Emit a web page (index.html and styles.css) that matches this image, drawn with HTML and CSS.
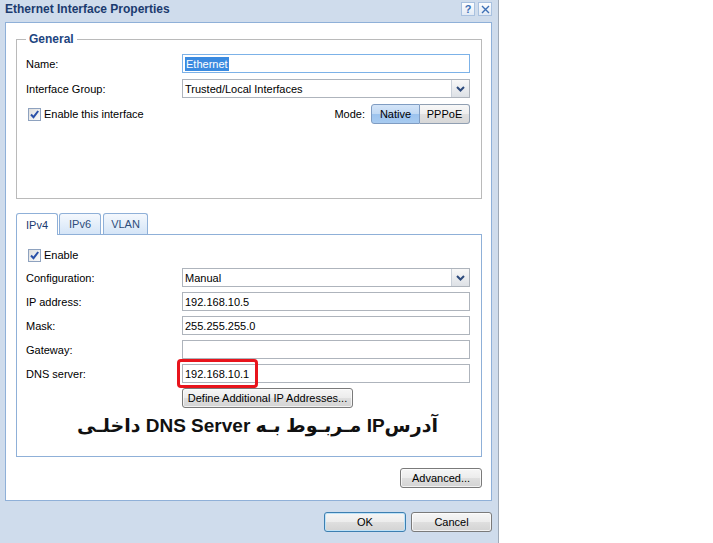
FILE: index.html
```html
<!DOCTYPE html>
<html>
<head>
<meta charset="utf-8">
<title>Ethernet Interface Properties</title>
<link rel="stylesheet" href="styles.css">
</head>
<body>
<div class="dialog">
  <div class="titlebar">
    <div class="title">Ethernet Interface Properties</div>
    <div class="tb-btns">
      <span class="tb-btn">?</span>
      <span class="tb-btn"><svg width="9" height="9" viewBox="0 0 9 9"><path d="M1 1L8 8M8 1L1 8" stroke="#3d6fb5" stroke-width="1.4" fill="none"/></svg></span>
    </div>
  </div>

  <div class="panel">
    <fieldset class="group">
      <legend>General</legend>
      <div class="row">
        <span class="lbl">Name:</span>
        <div class="input focus"><span class="sel">Ethernet</span></div>
      </div>
      <div class="row">
        <span class="lbl">Interface Group:</span>
        <div class="input select"><span class="val">Trusted/Local Interfaces</span><span class="arrow"><svg width="9" height="6" viewBox="0 0 9 6"><path d="M1 1L4.5 4.5L8 1" fill="none" stroke="#2d4a7c" stroke-width="2"/></svg></span></div>
      </div>
      <div class="row mode-row">
        <span class="check"><span class="cb"><svg width="11" height="11" viewBox="0 0 11 11"><path d="M2 5.5L4.5 8.2L9.2 2" fill="none" stroke="#2a50a8" stroke-width="2"/></svg></span>Enable this interface</span>
        <span class="mode-lbl">Mode:</span>
        <div class="seg">
          <span class="seg-btn active">Native</span>
          <span class="seg-btn">PPPoE</span>
        </div>
      </div>
    </fieldset>

    <div class="tabs">
      <span class="tab active t-ipv4">IPv4</span>
      <span class="tab t-ipv6">IPv6</span>
      <span class="tab t-vlan">VLAN</span>
    </div>
    <div class="tabpanel">
      <div class="row cb-row">
        <span class="check"><span class="cb"><svg width="11" height="11" viewBox="0 0 11 11"><path d="M2 5.5L4.5 8.2L9.2 2" fill="none" stroke="#2a50a8" stroke-width="2"/></svg></span>Enable</span>
      </div>
      <div class="row">
        <span class="lbl">Configuration:</span>
        <div class="input select"><span class="val">Manual</span><span class="arrow"><svg width="9" height="6" viewBox="0 0 9 6"><path d="M1 1L4.5 4.5L8 1" fill="none" stroke="#2d4a7c" stroke-width="2"/></svg></span></div>
      </div>
      <div class="row">
        <span class="lbl">IP address:</span>
        <div class="input">192.168.10.5</div>
      </div>
      <div class="row">
        <span class="lbl">Mask:</span>
        <div class="input">255.255.255.0</div>
      </div>
      <div class="row">
        <span class="lbl">Gateway:</span>
        <div class="input"></div>
      </div>
      <div class="row">
        <span class="lbl">DNS server:</span>
        <div class="input dns">192.168.10.1<span class="highlight"></span></div>
      </div>
      <div class="row btn-row">
        <span class="lbl"></span>
        <button class="btn define">Define Additional IP Addresses...</button>
      </div>
      <p class="note" dir="rtl">آدرسIP مـربـوط بـه DNS Server داخلـی</p>
    </div>
    <div class="adv-row">
      <button class="btn wide">Advanced...</button>
    </div>
  </div>

  <div class="footer">
    <button class="btn wide default">OK</button>
    <button class="btn wide">Cancel</button>
  </div>
</div>
</body>
</html>
```

FILE: styles.css
```css
* { box-sizing: border-box; }
html, body { margin: 0; padding: 0; background: #fff; }
body {
  font-family: "Liberation Sans", Arial, sans-serif;
  font-size: 11px;
  color: #000;
}

.dialog {
  width: 499px;
  height: 543px;
  background: #cfdcec;
  border-right: 1px solid #9ea9b7;
  display: flex;
  flex-direction: column;
}

.titlebar {
  height: 22px;
  flex: none;
  display: flex;
  justify-content: space-between;
  align-items: flex-start;
  padding: 2px 6px 0 5px;
}
.title {
  font-weight: bold;
  font-size: 12px;
  line-height: 14px;
  color: #1b3b6f;
}
.tb-btns { display: flex; gap: 3px; }
.tb-btn {
  width: 14px;
  height: 14px;
  border: 1px solid #a9c1df;
  background: linear-gradient(#fdfeff, #e2eaf5);
  color: #3d6fb5;
  font-weight: bold;
  font-size: 11px;
  display: flex;
  align-items: center;
  justify-content: center;
  line-height: 1;
}

.panel {
  flex: none;
  height: 479px;
  margin: 0 6px 0 5px;
  background: #fff;
  border: 1px solid #8fb0d8;
  padding: 0 9px 0 10px;
  display: flex;
  flex-direction: column;
}

.group {
  margin: 8px 0 0 0;
  border: 1px solid #bababa;
  padding: 7px 11px 74px 9px;
  min-width: 0;
}
.group legend {
  padding: 0 3px;
  font-weight: bold;
  font-size: 12px;
  line-height: 16px;
  color: #1d4580;
}

.row {
  display: flex;
  align-items: center;
  height: 19px;
  margin-bottom: 6px;
}
.row:last-child { margin-bottom: 0; }
.lbl { width: 156px; flex: none; }

.input {
  flex: 1;
  height: 19px;
  border: 1px solid #aeb4bc;
  background: #fff;
  padding: 0 2px;
  display: flex;
  align-items: center;
  white-space: nowrap;
}
.input.focus { border-color: #7cb2e8; }
.sel {
  background: #3a8ae0;
  color: #fff;
  padding: 0 1px;
  line-height: 14px;
}
.select { padding-right: 0; }
.select .val { flex: 1; }
.arrow {
  width: 18px;
  height: 17px;
  flex: none;
  border-left: 1px solid #c9d0d9;
  background: linear-gradient(#f8f8f8, #dde1e6);
  display: flex;
  align-items: center;
  justify-content: center;
}

.mode-row { height: 20px; }
.check {
  display: flex;
  align-items: center;
  gap: 3px;
  margin-left: 2px;
}
.cb {
  width: 13px;
  height: 13px;
  border: 1px solid #8ea2bf;
  background: linear-gradient(135deg, #dedede, #fbfbfb);
  display: flex;
  align-items: center;
  justify-content: center;
}
.mode-lbl { margin-left: auto; margin-right: 6px; }
.seg { display: flex; height: 20px; }
.seg-btn {
  width: 50px;
  height: 20px;
  border: 1px solid #909fb2;
  display: flex;
  align-items: center;
  justify-content: center;
  background: linear-gradient(#f8f8f8 0, #eeeeee 50%, #e0e0e0 50%, #d8d8d8 100%);
  border-radius: 0 3px 3px 0;
  border-left: none;
}
.seg-btn.active {
  width: 49px;
  border-left: 1px solid #7f9cc2;
  border-color: #7f9cc2;
  border-radius: 3px 0 0 3px;
  background: linear-gradient(#d4e5f8 0, #c0d8f3 50%, #9cc3ee 50%, #a8cbf0 100%);
}

.tabs {
  margin-top: 14px;
  height: 21px;
  flex: none;
  display: flex;
  gap: 1px;
  align-items: flex-start;
}
.tab {
  height: 21px;
  border: 1px solid #8fb0d8;
  border-bottom: none;
  border-radius: 3px 3px 0 0;
  background: linear-gradient(#f4f8fd, #d5e5f7);
  color: #2e4c7a;
  display: flex;
  align-items: center;
  justify-content: center;
}
.tab.active {
  height: 22px;
  background: #fff;
  color: #1b3b6f;
  position: relative;
  z-index: 1;
}
.t-ipv4 { width: 42px; }
.t-ipv6 { width: 42px; }
.t-vlan { width: 45px; margin-left: 1px; }

.tabpanel {
  height: 223px;
  flex: none;
  border: 1px solid #8fb0d8;
  padding: 13px 11px 0 9px;
}
.tabpanel .row { margin-bottom: 5px; }
.tabpanel .cb-row { height: 14px; margin-bottom: 6px; }
.tabpanel .btn-row { height: 20px; margin-bottom: 0; }

.dns { position: relative; }
.highlight {
  position: absolute;
  left: -6px;
  top: -6px;
  width: 81px;
  height: 29px;
  border: 3px solid #e8141c;
  border-radius: 4px;
}

.note {
  margin: 7px 0 0 0;
  padding-right: 32px;
  text-align: right;
  white-space: nowrap;
  font-family: "Liberation Sans", "DejaVu Sans", sans-serif;
  font-weight: bold;
  font-size: 19px;
  line-height: 22px;
  color: #111;
}

.btn {
  height: 20px;
  border: 1px solid #7a7a7a;
  border-radius: 3px;
  background: linear-gradient(#f6f6f6 0, #ececec 50%, #dfdfdf 50%, #d3d3d3 100%);
  font-family: "Liberation Sans", Arial, sans-serif;
  font-size: 11px;
  color: #000;
  padding: 0 2px;
  margin: 0;
  white-space: nowrap;
  box-shadow: inset 0 0 0 1px rgba(255,255,255,0.7);
}
.btn.define { width: 171px; }
.btn.wide { width: 82px; }
.btn.default { border-color: #3c7fb1; box-shadow: inset 0 0 0 1px #bfe2f7; }

.adv-row {
  margin-top: 11px;
  display: flex;
  justify-content: flex-end;
}

.footer {
  flex: 1;
  display: flex;
  justify-content: flex-end;
  align-items: flex-start;
  gap: 5px;
  padding: 11px 6px 0 0;
}
.footer .btn:last-child { width: 81px; }
```
